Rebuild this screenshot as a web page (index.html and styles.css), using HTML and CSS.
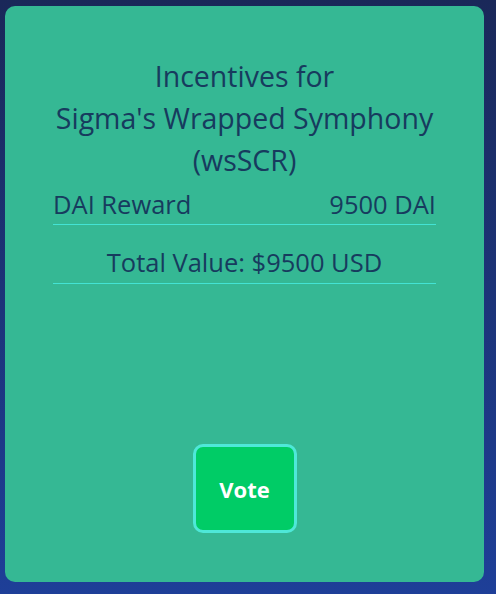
FILE: index.html
```html
<!DOCTYPE html>
<html>
<head>
<meta charset="utf-8">
<link rel="stylesheet" href="styles.css">
</head>
<body>
<div class="card">
  <h2 class="title">Incentives for<br>Sigma's Wrapped Symphony<br>(wsSCR)</h2>
  <div class="row">
    <span>DAI Reward</span>
    <span>9500 DAI</span>
  </div>
  <div class="total">Total Value: $9500 USD</div>
  <div class="actions">
    <button class="vote">Vote</button>
  </div>
</div>
</body>
</html>
```

FILE: styles.css
```css
html, body {
  margin: 0;
  height: 100%;
}
body {
  background: linear-gradient(180deg, #1a2859 0%, #1e3f98 100%);
  padding: 6px 12px 12px 5px;
  box-sizing: border-box;
  font-family: "Open Sans", "Noto Sans", sans-serif;
}
.card {
  height: 576px;
  box-sizing: border-box;
  background: #35b894;
  border-radius: 10px;
  padding: 49px 48px 48px 48px;
  display: flex;
  flex-direction: column;
  color: #173b5e;
}
.title {
  margin: 0;
  font-weight: 400;
  font-size: 28.5px;
  line-height: 42px;
  text-align: center;
}
.row {
  display: flex;
  justify-content: space-between;
  font-size: 25.5px;
  line-height: 34px;
  padding: 6px 0 3px;
  border-bottom: 1px solid #43e3d4;
}
.total {
  text-align: center;
  font-size: 25.5px;
  line-height: 34px;
  margin-top: 20px;
  padding-bottom: 4px;
  border-bottom: 1px solid #43e3d4;
}
.actions {
  margin-top: auto;
  display: flex;
  justify-content: center;
}
.vote {
  width: 104px;
  height: 89px;
  border: 3px solid #4ee8d8;
  border-radius: 10px;
  background: #00cc66;
  color: #fff;
  font-family: "Open Sans", sans-serif;
  font-weight: 700;
  font-size: 22px;
  margin-bottom: 1px;
  padding: 0;
}
```
